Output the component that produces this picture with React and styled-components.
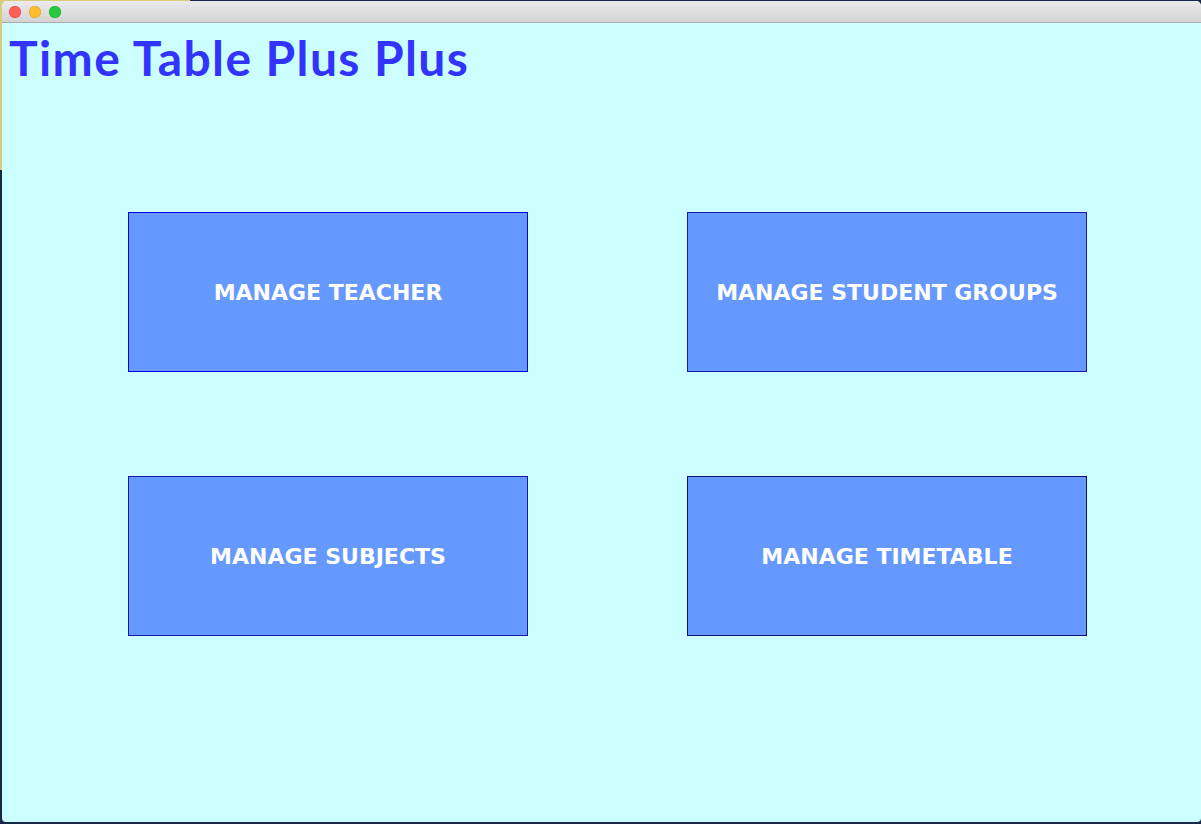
import React from "react";
import styled, { createGlobalStyle } from "styled-components";

const Global = createGlobalStyle`
  html, body {
    margin: 0;
    padding: 0;
    width: 1201px;
    height: 824px;
    overflow: hidden;
  }
  body {
    background:
      linear-gradient(#d9cb78, #d9cb78) 0 0 / 190px 170px no-repeat,
      #17284a;
  }
`;

const Desktop = styled.div`
  width: 1201px;
  height: 824px;
  padding: 1px 0 2px 2px;
  box-sizing: border-box;
`;

const Window = styled.div`
  width: 1199px;
  height: 821px;
  display: flex;
  flex-direction: column;
  border-radius: 5px 5px 4px 4px;
  overflow: hidden;
  background: #ccffff;
`;

const TitleBar = styled.div`
  height: 21px;
  flex: none;
  background: linear-gradient(#ebebeb, #d3d3d3);
  border-bottom: 1px solid #b1a9b1;
  display: flex;
  align-items: center;
  gap: 8px;
  padding-left: 7px;
`;

const Light = styled.span`
  width: 12px;
  height: 12px;
  border-radius: 50%;
  background: ${(p) => p.$color};
  box-shadow: inset 0 0 0 0.5px ${(p) => p.$edge};
`;

const Content = styled.div`
  flex: 1;
  display: flex;
  flex-direction: column;
`;

const Heading = styled.h1`
  margin: 0;
  padding: 9px 0 0 7px;
  height: 60px;
  font-family: "Trebuchet MS", Lato, "Open Sans", sans-serif;
  font-weight: 700;
  font-size: 48px;
  line-height: 52px;
  color: #3333ff;
  letter-spacing: 1.4px;
`;

const Grid = styled.div`
  display: grid;
  grid-template-columns: 400px 400px;
  grid-auto-rows: 160px;
  column-gap: 159px;
  row-gap: 104px;
  padding: 120px 0 0 126px;
`;

const MenuButton = styled.button`
  width: 400px;
  height: 160px;
  margin: 0;
  padding: 0;
  background: #6699ff;
  border: 1px solid ${(p) => p.$edge};
  color: #ffffff;
  font-family: "DejaVu Sans", "Open Sans", sans-serif;
  font-weight: 700;
  font-size: 22px;
  letter-spacing: 0;
  display: flex;
  align-items: center;
  justify-content: center;
  cursor: pointer;
`;

const buttons = [
  { label: "MANAGE TEACHER", edge: "#0000dd" },
  { label: "MANAGE STUDENT GROUPS", edge: "#1a1aa0" },
  { label: "MANAGE SUBJECTS", edge: "#1a1aa0" },
  { label: "MANAGE TIMETABLE", edge: "#0a0a70" },
];

export default function App() {
  return (
    <>
      <Global />
      <Desktop>
        <Window>
          <TitleBar>
            <Light $color="#fe5f57" $edge="#e0443e" />
            <Light $color="#febc2e" $edge="#dea123" />
            <Light $color="#28c840" $edge="#1aab29" />
          </TitleBar>
          <Content>
            <Heading>Time Table Plus Plus</Heading>
            <Grid>
              {buttons.map((b) => (
                <MenuButton key={b.label} $edge={b.edge}>
                  {b.label}
                </MenuButton>
              ))}
            </Grid>
          </Content>
        </Window>
      </Desktop>
    </>
  );
}
